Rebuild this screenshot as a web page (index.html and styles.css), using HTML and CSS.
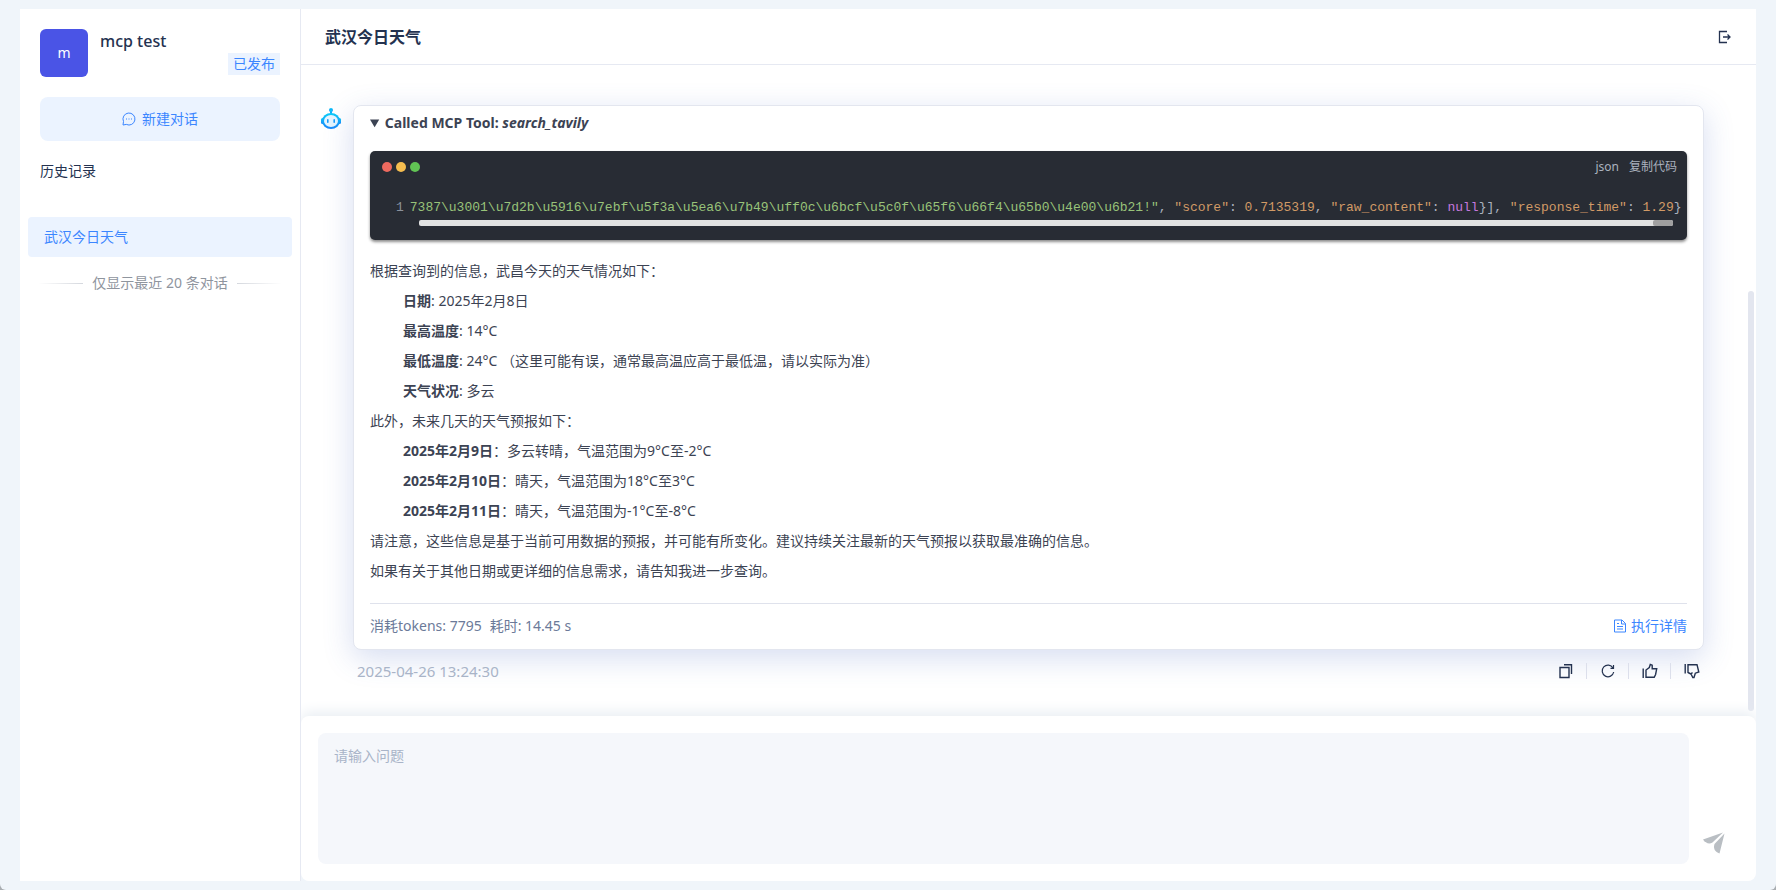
FILE: index.html
```html
<!DOCTYPE html>
<html lang="zh-CN">
<head>
    <meta charset="UTF-8">
    <meta name="viewport" content="width=device-width, initial-scale=1.0">
    <title>武汉今日天气</title>
    <link rel="stylesheet" href="styles.css">
</head>
<body>
    <div class="page">
        <div class="app">
            <!-- 左侧栏 -->
            <aside class="sidebar">
                <div class="app-info">
                    <div class="app-logo">m</div>
                    <div class="app-name">mcp test</div>
                    <span class="app-tag">已发布</span>
                </div>
                <button class="new-chat" type="button">
                    <svg width="14" height="14" viewBox="0 0 14 14" fill="none" stroke="currentColor">
                        <path d="M1 13l.5-3.500A6 6 0 1 1 4.300 12.400z"/>
                        <path d="M4 7h1M6.500 7h1M9 7h1" stroke-width="1.200"/>
                    </svg>
                    新建对话
                </button>
                <h2 class="history-title">历史记录</h2>
                <a class="history-item" href="#">武汉今日天气</a>
                <div class="history-tip">仅显示最近 20 条对话</div>
            </aside>

            <!-- 右侧对话 -->
            <main class="main">
                <header class="header">
                    <h1>武汉今日天气</h1>
                    <button class="icon-btn" type="button" aria-label="退出">
                        <svg width="14" height="14" viewBox="0 0 14 14" fill="none" stroke="currentColor" stroke-width="1.300">
                            <path d="M9 1.500H1.500v11H9M5 7h7M9.500 4.500L12 7 9.500 9.500"/>
                        </svg>
                    </button>
                </header>

                <div class="chat">
                    <svg class="robot" width="24" height="26" viewBox="0 0 24 26">
                        <defs>
                            <linearGradient id="robotFill" x1="0" y1="0" x2="0" y2="1">
                                <stop offset="0" stop-color="#0ccdf8"/>
                                <stop offset="1" stop-color="#1a86fa"/>
                            </linearGradient>
                        </defs>
                        <g fill="url(#robotFill)">
                            <circle cx="12" cy="5" r="2"/>
                            <rect x="11" y="5" width="2" height="5"/>
                            <rect x="2" y="13" width="3" height="6" rx="1.500"/>
                            <rect x="19" y="13" width="3" height="6" rx="1.500"/>
                            <ellipse cx="12" cy="16" rx="9" ry="8"/>
                        </g>
                        <ellipse cx="12" cy="16" rx="7" ry="6" fill="#e6f5ff"/>
                        <g fill="#1a9cfa">
                            <rect x="8" y="14" width="1.600" height="4" rx=".8"/>
                            <rect x="14.400" y="14" width="1.600" height="4" rx=".8"/>
                        </g>
                    </svg>

                    <div class="message">
                        <div class="card">
                            <details open>
                                <summary>Called MCP Tool: <em>search_tavily</em></summary>
                                <div class="code">
                                    <div class="code-head">
                                        <i class="dot red"></i><i class="dot yellow"></i><i class="dot green"></i>
                                        <span class="lang">json</span>
                                        <button class="copy" type="button">复制代码</button>
                                    </div>
                                    <div class="code-line">
                                        <span class="line-no">1</span>
                                        <code><span class="str">7387\u3001\u7d2b\u5916\u7ebf\u5f3a\u5ea6\u7b49\uff0c\u6bcf\u5c0f\u65f6\u66f4\u65b0\u4e00\u6b21!"</span>, <span class="attr">"score"</span>: <span class="attr">0.7135319</span>, <span class="attr">"raw_content"</span>: <span class="kw">null</span>}], <span class="attr">"response_time"</span>: <span class="attr">1.29</span>}</code>
                                    </div>
                                    <div class="track"><div class="thumb"></div></div>
                                </div>
                            </details>

                            <div class="answer">
                                <p>根据查询到的信息，武昌今天的天气情况如下：</p>
                                <ul>
                                    <li><strong>日期</strong>: 2025年2月8日</li>
                                    <li><strong>最高温度</strong>: 14°C</li>
                                    <li><strong>最低温度</strong>: 24°C （这里可能有误，通常最高温应高于最低温，请以实际为准）</li>
                                    <li><strong>天气状况</strong>: 多云</li>
                                </ul>
                                <p>此外，未来几天的天气预报如下：</p>
                                <ul>
                                    <li><strong>2025年2月9日</strong>：多云转晴，气温范围为9°C至-2°C</li>
                                    <li><strong>2025年2月10日</strong>：晴天，气温范围为18°C至3°C</li>
                                    <li><strong>2025年2月11日</strong>：晴天，气温范围为-1°C至-8°C</li>
                                </ul>
                                <p>请注意，这些信息是基于当前可用数据的预报，并可能有所变化。建议持续关注最新的天气预报以获取最准确的信息。</p>
                                <p>如果有关于其他日期或更详细的信息需求，请告知我进一步查询。</p>
                            </div>

                            <div class="card-foot">
                                <span>消耗tokens: 7795</span>
                                <span>耗时: 14.45 s</span>
                                <a class="detail" href="#">
                                    <svg width="12" height="14" viewBox="0 0 12 14" fill="none" stroke="currentColor">
                                        <path d="M.5 1h7.500l3.500 3.500V13H.5zM7.500 1v4h4M3 4.500h2M3 7.500h6M3 10h6"/>
                                    </svg>
                                    执行详情
                                </a>
                            </div>
                        </div>

                        <div class="meta">
                            <time>2025-04-26 13:24:30</time>
                            <div class="actions">
                                <button class="icon-btn" type="button" aria-label="复制">
                                    <svg width="16" height="16" viewBox="0 0 16 16" fill="none" stroke="currentColor" stroke-width="1.400">
                                        <path d="M2 4.500h9v10H2zM6 1.700h7.500V11"/>
                                    </svg>
                                </button>
                                <button class="icon-btn" type="button" aria-label="重新生成">
                                    <svg width="16" height="16" viewBox="0 0 16 16" fill="none" stroke="currentColor" stroke-width="1.200">
                                        <path d="M13.700 9A5.800 5.800 0 1 1 13 5M13.500 2V5.300H10.500"/>
                                    </svg>
                                </button>
                                <button class="icon-btn" type="button" aria-label="赞">
                                    <svg width="16" height="16" viewBox="0 0 16 16" fill="none" stroke="currentColor" stroke-width="1.400">
                                        <path d="M1.200 5.500v9.500M4 14.300V7L7.300 4.500 8.300 1.500 10.200 2.200V5.800H14.700L13.600 11.500 12.200 14.300z"/>
                                    </svg>
                                </button>
                                <button class="icon-btn" type="button" aria-label="踩">
                                    <svg width="16" height="16" viewBox="0 0 16 16" fill="none" stroke="currentColor" stroke-width="1.400">
                                        <path d="M1.200 1v9.500M4 10V1.700H13L14.800 9 11.300 10.200 10 14.500H8.800L7 11 8.500 9.500M4 9.500L7 11"/>
                                    </svg>
                                </button>
                            </div>
                        </div>
                    </div>
                    <div class="scrollbar"></div>
                </div>

                <!-- 输入区域 -->
                <form class="composer">
                    <textarea placeholder="请输入问题" aria-label="请输入问题"></textarea>
                    <button class="send" type="button" aria-label="发送">
                        <svg width="22" height="22" viewBox="0 0 22 22" fill="#b9bec3">
                            <path d="M0 7.500L20 0.500 9.500 10.500C6 12.500 2.500 11 0 7.500z"/>
                            <path d="M21.500 1.500L16.500 21.500C12 20 10 16.500 11.500 12z"/>
                        </svg>
                    </button>
                </form>
            </main>
        </div>
    </div>
</body>
</html>
```
FILE: styles.css
```css
* {
    box-sizing: border-box;
}
html {
    background: #a9adb1;
}
body {
    margin: 0;
    font-family: "Noto Sans", "Noto Sans CJK SC", sans-serif;
    font-size: 14px;
    line-height: 22px;
    color: #243250;
}
h1, h2, p, ul {
    margin: 0;
    padding: 0;
}
button {
    padding: 0;
    border: none;
    background: none;
    color: inherit;
    font: inherit;
    cursor: pointer;
}
a {
    text-decoration: none;
}
svg {
    display: block;
}
.page {
    height: 100vh;
    padding: 9px 20px;
    background: #f0f5fa;
    border-radius: 0 0 6px 6px;
}
.app {
    display: flex;
    height: 100%;
}

/* 左侧栏 */
.sidebar {
    display: flex;
    flex-direction: column;
    flex: 0 0 281px;
    padding: 20px 8px;
    background: #fff;
    border-right: 1px solid #e6e9f2;
}
.app-info {
    display: flex;
    gap: 12px;
    margin: 0 12px 20px;
}
.app-logo {
    width: 48px;
    height: 48px;
    border-radius: 6px;
    background: #4a54e6;
    color: #fff;
    line-height: 48px;
    text-align: center;
}
.app-name {
    flex: 1;
    font-size: 16px;
    font-weight: 500;
    line-height: 24px;
}
.app-tag {
    align-self: flex-end;
    margin-bottom: 2px;
    padding: 0 5px;
    background: #ebf3ff;
    color: #3b86ff;
}
.new-chat {
    display: flex;
    align-items: center;
    justify-content: center;
    gap: 6px;
    height: 44px;
    margin: 0 12px;
    border-radius: 8px;
    background: #ebf3ff;
    color: #3b86ff;
}
.history-title {
    margin: 19px 12px 35px;
    font-size: 14px;
    font-weight: 400;
}
.history-item {
    padding: 9px 16px;
    border-radius: 4px;
    background: #ebf3ff;
    color: #3b86ff;
}
.history-tip {
    display: flex;
    align-items: center;
    gap: 9px;
    margin: 15px 10px;
    color: #8f959e;
    white-space: nowrap;
}
.history-tip::before,
.history-tip::after {
    content: "";
    flex: 1;
    height: 1px;
    background: linear-gradient(to right, transparent, #d5d8de);
}
.history-tip::after {
    background: linear-gradient(to left, transparent, #d5d8de);
}

/* 右侧对话 */
.main {
    display: flex;
    flex-direction: column;
    flex: 1;
    min-width: 0;
    background: #fff;
    border-radius: 0 0 8px 8px;
    overflow: hidden;
}
.header {
    display: flex;
    align-items: center;
    justify-content: space-between;
    height: 56px;
    padding: 0 24px;
    border-bottom: 1px solid #e6e9f2;
}
.header h1 {
    font-size: 16px;
    font-weight: 600;
    line-height: 24px;
}
.chat {
    position: relative;
    display: flex;
    flex: 1;
    gap: 10px;
    min-height: 0;
    padding: 40px 52px 0 18px;
    overflow: hidden;
}
.robot {
    flex: none;
}
.message {
    flex: 1;
    min-width: 0;
}
.card {
    padding: 6px 16px 12px;
    border: 1px solid #e3e6ef;
    border-radius: 8px;
    background: #fff;
    box-shadow: 0 8px 30px rgba(70, 100, 190, 0.22);
    color: #3c4353;
}
.card summary {
    font-weight: 700;
}
.code {
    height: 89px;
    margin-top: 17px;
    padding: 5px 10px 0 12px;
    border-radius: 5px;
    background: #282c34;
    box-shadow: 0 2px 3px rgba(0, 0, 0, 0.45);
    color: #abb2bf;
}
.code-head {
    display: flex;
    align-items: center;
    height: 22px;
    font-size: 12px;
}
.dot {
    width: 10px;
    height: 10px;
    margin-right: 4px;
    border-radius: 50%;
}
.red {
    background: #ee6a5f;
}
.yellow {
    background: #f5bd4f;
}
.green {
    background: #61c454;
}
.lang {
    margin: 0 10px 0 auto;
}
.code-line {
    display: flex;
    gap: 6px;
    margin-top: 19px;
    padding-left: 14px;
    font: 13px/22px "Liberation Mono", monospace;
    white-space: pre;
}
.code-line code {
    font: inherit;
}
.line-no {
    color: #8b919c;
}
.str {
    color: #98c379;
}
.attr {
    color: #d19a66;
}
.kw {
    color: #c678dd;
}
.track {
    height: 6px;
    margin: 1px 4px 0 37px;
    border-radius: 2px;
    background: #e1e2e2;
}
.thumb {
    width: 20px;
    height: 6px;
    margin-left: auto;
    border-radius: 2px;
    background: #a0a0a0;
}
.answer {
    display: flex;
    flex-direction: column;
    gap: 8px;
    margin: 20px 0 21px;
}
.answer ul {
    display: flex;
    flex-direction: column;
    gap: 8px;
    padding-left: 33px;
    list-style: none;
}
.card-foot {
    display: flex;
    gap: 8px;
    padding-top: 11px;
    border-top: 1px solid #dfe2ec;
    color: #6b7a99;
}
.detail {
    display: flex;
    align-items: center;
    gap: 5px;
    margin-left: auto;
    color: #3b86ff;
}
.meta {
    display: flex;
    align-items: center;
    justify-content: space-between;
    margin-top: 10px;
    padding: 0 4px;
    color: #a9b4c8;
}
.meta time {
    font-size: 15px;
}
.actions {
    display: flex;
    align-items: center;
}
.icon-btn {
    color: #243250;
}
.actions .icon-btn + .icon-btn {
    margin-left: 12px;
    padding-left: 13px;
    border-left: 1px solid #dcdfeb;
}
.scrollbar {
    position: absolute;
    right: 2px;
    bottom: 5px;
    width: 6px;
    height: 420px;
    border-radius: 3px;
    background: #e3e6ef;
}

/* 输入区域 */
.composer {
    position: relative;
    display: flex;
    align-items: flex-end;
    gap: 14px;
    padding: 17px 31px 17px 17px;
    border-radius: 8px;
    background: #fff;
    box-shadow: 0 -4px 14px #e9eef3;
}
.composer textarea {
    flex: 1;
    height: 131px;
    padding: 12px 16px;
    border: none;
    border-radius: 8px;
    background: #f5f7fb;
    color: #243250;
    font: inherit;
    resize: none;
}
.composer textarea::placeholder {
    color: #a9b4c8;
}
.send {
    margin-bottom: 10px;
}
```
